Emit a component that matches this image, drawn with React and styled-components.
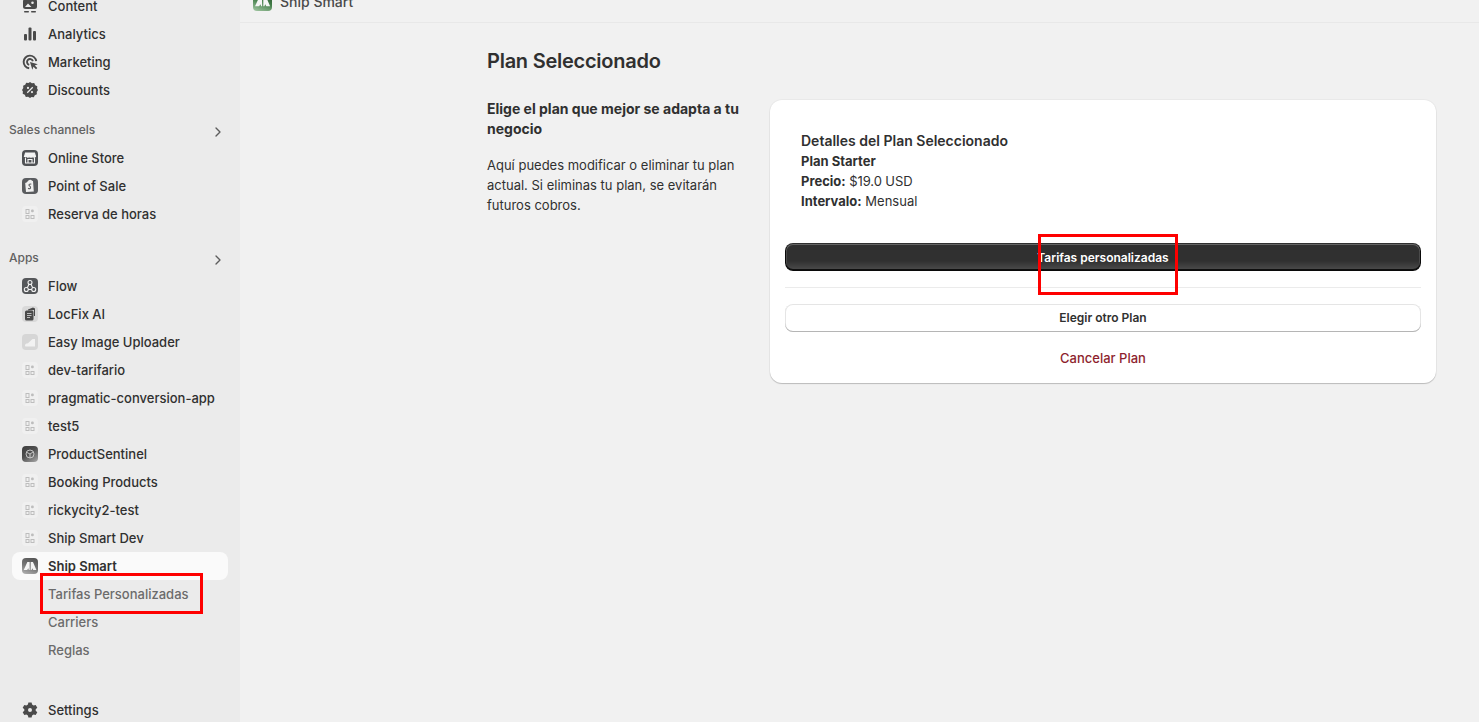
import styled, { createGlobalStyle } from 'styled-components';
import { ChevronRight } from 'lucide-react';

const GlobalStyle = createGlobalStyle`
  html, body {
    margin: 0;
    height: 100%;
    overflow: hidden;
    background: #f1f1f1;
    font-family: Inter, 'Noto Sans', sans-serif;
    color: #303030;
  }
  * {
    box-sizing: border-box;
  }
`;

const Page = styled.div`
  position: relative;
  display: flex;
  height: 722px;
  overflow: hidden;
`;

const Sidebar = styled.nav`
  flex: 0 0 240px;
  background: #ebebeb;
  padding: 0 12px;
  margin-top: -8px;
  height: 732px;
`;

const Row = styled.div`
  display: flex;
  align-items: center;
  gap: 8px;
  height: 28px;
  padding-left: 8px;
  border-radius: 8px;
  font-size: 13px;
  color: #303030;
  background: ${(p) => (p.$active ? '#fafafa' : 'transparent')};
  font-weight: ${(p) => (p.$active ? 600 : 500)};
`;

const SubRow = styled(Row)`
  padding-left: 36px;
  color: #6b6b6b;
  font-weight: 450;
`;

const SettingsRow = styled(Row)`
  margin-top: 32px;
`;

const SectionHead = styled.div`
  display: flex;
  align-items: center;
  justify-content: space-between;
  height: 28px;
  margin-top: ${(p) => p.$top}px;
  margin-left: -3px;
  padding: 0 2px 2px 0;
  font-size: 12px;
  font-weight: 550;
  color: #616161;
  svg {
    margin-top: 5px;
    color: #5c5c5c;
  }
`;

const IconBox = styled.span`
  display: flex;
  flex: 0 0 20px;
  width: 20px;
  height: 20px;
`;

const Tile = styled.span`
  display: flex;
  align-items: center;
  justify-content: center;
  flex: 0 0 16px;
  width: 16px;
  height: 16px;
  margin: 0 2px;
  border-radius: 4px;
  background: ${(p) => p.$bg || '#f0f0f0'};
`;

const Main = styled.main`
  flex: 1;
  min-width: 0;
  background: #f1f1f1;
`;

const TopBar = styled.header`
  height: 23px;
  padding-left: 13px;
  border-bottom: 1px solid #e8e8e8;
  overflow: hidden;
  font-size: 14px;
  font-weight: 450;
  color: #4a4a4a;
`;

const TopInner = styled.div`
  display: flex;
  align-items: center;
  gap: 8px;
  height: 20px;
  margin-top: -9px;
`;

const AppMark = styled.span`
  display: flex;
  align-items: flex-end;
  justify-content: center;
  width: 19px;
  height: 20px;
  border-radius: 4px;
  background: linear-gradient(200deg, #2f4a33 0%, #3f7a45 50%, #a5c9a6 100%);
`;

const Content = styled.div`
  width: 950px;
  margin-left: 247px;
  padding-top: 25px;
`;

const Title = styled.h1`
  margin: 0;
  font-size: 20px;
  line-height: 26px;
  font-weight: 600;
  letter-spacing: -0.25px;
  color: #303030;
`;

const Columns = styled.div`
  display: grid;
  grid-template-columns: 283px 666px;
  margin-top: 25px;
`;

const Aside = styled.div`
  padding-right: 24px;
  h2 {
    margin: 0 0 16px;
    font-size: 14px;
    line-height: 20px;
    font-weight: 650;
    color: #303030;
  }
  p {
    margin: 0;
    font-size: 13px;
    line-height: 20px;
    color: #303030;
  }
`;

const Card = styled.section`
  height: 283px;
  margin-top: 1px;
  padding: 31px 15px 0;
  background: #fff;
  border-radius: 12px;
  box-shadow: 0 1px 1px rgba(0, 0, 0, 0.2), 0 0 0 1px rgba(0, 0, 0, 0.03);
`;

const Details = styled.div`
  padding-left: 16px;
  font-size: 13px;
  line-height: 20px;
  color: #303030;
  b {
    font-weight: 650;
  }
`;

const DetailsTitle = styled.div`
  font-size: 14px;
  font-weight: 600;
`;

const Price = styled.span`
  letter-spacing: -0.1px;
`;

const BaseButton = styled.button`
  display: block;
  width: 100%;
  height: 28px;
  padding: 0;
  border: none;
  border-radius: 8px;
  font-family: inherit;
  font-size: 12px;
  font-weight: 600;
  cursor: pointer;
`;

const PrimaryButton = styled(BaseButton)`
  margin-top: 32px;
  color: #fff;
  background: linear-gradient(180deg, rgba(48, 48, 48, 0) 63.53%, rgba(255, 255, 255, 0.15) 100%), #303030;
  box-shadow: 0 -1px 0 1px rgba(0, 0, 0, 0.8) inset, 0 0 0 1px #303030 inset, 0 0.5px 0 1.5px rgba(255, 255, 255, 0.25) inset;
`;

const Divider = styled.hr`
  margin: 16px 0;
  border: none;
  border-top: 1px solid #ebebeb;
`;

const SecondaryButton = styled(BaseButton)`
  padding-bottom: 2px;
  color: #303030;
  background: #fff;
  box-shadow: 0 -1px 0 0 #b5b5b5 inset, 0 0 0 1px rgba(0, 0, 0, 0.1) inset;
`;

const CancelLink = styled.div`
  margin-top: 16px;
  text-align: center;
  font-size: 13px;
  line-height: 20px;
  font-weight: 500;
  color: #8e1f2e;
`;

const Callout = styled.div`
  position: absolute;
  left: ${(p) => p.$x}px;
  top: ${(p) => p.$y}px;
  width: ${(p) => p.$w}px;
  height: ${(p) => p.$h}px;
  border: 3px solid #fe0000;
  pointer-events: none;
`;

const Glyph = ({ children, fill = '#4a4a4a' }) => (
  <svg width="20" height="20" viewBox="0 0 20 20" fill={fill}>
    {children}
  </svg>
);

const ContentIcon = () => (
  <Glyph>
    <path fillRule="evenodd" d="M5.5 3h9A2.5 2.5 0 0 1 17 5.5v5a2.5 2.5 0 0 1-2.5 2.5h-9A2.5 2.5 0 0 1 3 10.5v-5A2.5 2.5 0 0 1 5.5 3Zm7 2.5a1.3 1.3 0 1 0 0 2.6 1.3 1.3 0 0 0 0-2.6ZM5 11l3-3.5 3.5 3.5H5Z" />
    <rect x="4" y="15" width="5" height="1.5" rx=".7" />
    <rect x="11" y="15" width="5" height="1.5" rx=".7" />
  </Glyph>
);

const AnalyticsIcon = () => (
  <Glyph>
    <rect x="4" y="10" width="3" height="6.5" rx="1" />
    <rect x="8.5" y="3.5" width="3" height="13" rx="1" />
    <rect x="13" y="7" width="3" height="9.5" rx="1" />
  </Glyph>
);

const MarketingIcon = () => (
  <Glyph>
    <g fill="none" stroke="#4a4a4a" strokeWidth="1.9">
      <path d="M9.2 16.2A6.3 6.3 0 1 1 16.2 9.2" />
      <path d="M9.2 12.9A3 3 0 1 1 12.9 9.2" />
    </g>
    <path d="M10 10l7.8 2.3-3 1.2 2.5 2.5-1.3 1.300-2.500-2.500-1.200 3L10 10Z" />
  </Glyph>
);

const DiscountIcon = () => (
  <Glyph>
    <path fillRule="evenodd" d="M10 2l1.900 1.300 2.300-.2 1 2.100 2.100 1-.2 2.300L18 10l-1.300 1.900.2 2.300-2.100 1-1 2.100-2.300-.2L10 18l-1.900-1.300-2.300.2-1-2.100-2.100-1 .2-2.300L2 10l1.300-1.900-.2-2.300 2.100-1 1-2.100 2.300.2L10 2Zm2.300 4.800-5.500 5.500.9.900 5.500-5.500-.9-.9ZM8 6.800a1.100 1.100 0 1 0 0 2.200 1.100 1.100 0 0 0 0-2.200Zm4 4.200a1.100 1.100 0 1 0 0 2.200 1.100 1.100 0 0 0 0-2.200Z" />
  </Glyph>
);

const SettingsIcon = () => (
  <Glyph>
    <path fillRule="evenodd" d="M8.400 2.500h3.200l.5 2.100 1.500.9 2.100-.6 1.600 2.800-1.600 1.500v1.600l1.600 1.500-1.600 2.800-2.100-.6-1.500.9-.5 2.100H8.400l-.5-2.100-1.500-.9-2.100.6-1.600-2.800 1.600-1.500V9.200L2.700 7.700l1.600-2.800 2.100.6 1.500-.9.500-2.100ZM10 8a2 2 0 1 0 0 4 2 2 0 0 0 0-4Z" />
  </Glyph>
);

const PlaceholderTile = () => (
  <Tile>
    <svg width="12" height="14" viewBox="0 0 12 14" fill="#bdbdbd">
      <path fillRule="evenodd" d="M1.500 2h4v5h-4V2Zm1 1v3h2V3h-2Z" />
      <rect x="7" y="2.500" width="2.800" height="2.800" rx="1.200" />
      <path fillRule="evenodd" d="M1.500 8h4v4h-4V8Zm1 1v2h2V9h-2ZM6.500 8h4v4h-4V8Zm1 1v2h2V9h-2Z" />
    </svg>
  </Tile>
);

const StoreTile = () => (
  <Tile $bg="#4f5154">
    <svg width="16" height="16" viewBox="0 0 16 16" fill="none" stroke="#f4f4f4" strokeWidth="1.100">
      <path d="M3.500 3h9l1 3.500c-.8 1-2 1-2.800 0-.8 1-2.600 1-3.400 0-.8 1-2 1-2.800 0H2.500l1-3.500Z" fill="#f4f4f4" />
      <path d="M3.500 7.500V13h9V7.500" />
      <path d="M6 13V9.500h4V13" />
    </svg>
  </Tile>
);

const PosTile = () => (
  <Tile $bg="#5a5c5f">
    <svg width="16" height="16" viewBox="0 0 16 16">
      <path d="M4.500 4.500c1-.5 1.500-2.500 3.500-2.800 1-.1 1.700.3 2 1l1 .3.8 10.500-7.800.5-.8-9 1.300-.5Z" fill="#f0f0f0" />
      <path d="M9.300 6.300c-1.700-.8-3 .4-2 1.400.8.800 1.900 1.200 1.100 2.400-.5.700-1.700.6-2.300.2" fill="none" stroke="#5a5c5f" strokeWidth="1.100" />
    </svg>
  </Tile>
);

const FlowTile = () => (
  <Tile $bg="#55575a">
    <svg width="16" height="16" viewBox="0 0 16 16" fill="none" stroke="#f2f2f2" strokeWidth="1.100">
      <circle cx="8" cy="4.500" r="2" />
      <circle cx="4.300" cy="11.500" r="2" />
      <circle cx="11.700" cy="11.500" r="2" />
      <path d="M7 6.300 5.300 9.800M9 6.300l1.700 3.500M6.300 11.500h3.400" />
    </svg>
  </Tile>
);

const LocFixTile = () => (
  <Tile $bg="#d9d9d9">
    <svg width="16" height="16" viewBox="0 0 16 16" fill="#4a4a4a">
      <path d="M6 3.500 11 1.500l2 1v7.500h-1V4L6 4.500v-1Z" />
      <rect x="3" y="4.500" width="8.500" height="10" rx="1.500" />
      <path d="M5 7.500h4.500M5 9.500h4.500M5 11.500h3" stroke="#d9d9d9" strokeWidth=".8" />
    </svg>
  </Tile>
);

const ImageTile = () => (
  <Tile $bg="#d6d6d6">
    <svg width="16" height="16" viewBox="0 0 16 16" fill="#f2f2f2">
      <path d="M3 11.500c0-1.500 1.500-2.200 3-2.200L10.500 5H13v7.500H4c-.6 0-1-.4-1-1Z" />
    </svg>
  </Tile>
);

const SentinelTile = () => (
  <Tile $bg="linear-gradient(145deg, #3c3c3c 0%, #505050 45%, #aaaaaa 100%)">
    <svg width="12" height="12" viewBox="0 0 12 12" fill="none" stroke="#d0d0d0" strokeWidth=".9">
      <circle cx="6" cy="6" r="4" />
      <path d="M3 4.500 6 6l3-2M6 6v4" />
    </svg>
  </Tile>
);

const ShipShape = ({ size, color }) => (
  <svg width={size} height={size} viewBox="0 0 14 14" fill={color}>
    <path d="M1.500 10.500 4.700 3.500h2V10.500H6L5.500 9 4.500 10.500H1.500Z" />
    <path d="M7.600 3.500h2l3 7H9.800L9 9l-.6 1.500h-.8v-7Z" />
  </svg>
);

const App = () => {
  return (
    <Page>
      <GlobalStyle />
      <Sidebar>
        <Row><IconBox><ContentIcon /></IconBox>Content</Row>
        <Row><IconBox><AnalyticsIcon /></IconBox>Analytics</Row>
        <Row><IconBox><MarketingIcon /></IconBox>Marketing</Row>
        <Row><IconBox><DiscountIcon /></IconBox>Discounts</Row>

        <SectionHead $top={12}>Sales channels<ChevronRight size={16} /></SectionHead>
        <Row><StoreTile />Online Store</Row>
        <Row><PosTile />Point of Sale</Row>
        <Row><PlaceholderTile />Reserva de horas</Row>

        <SectionHead $top={16}>Apps<ChevronRight size={16} /></SectionHead>
        <Row><FlowTile />Flow</Row>
        <Row><LocFixTile />LocFix AI</Row>
        <Row><ImageTile />Easy Image Uploader</Row>
        <Row><PlaceholderTile />dev-tarifario</Row>
        <Row><PlaceholderTile />pragmatic-conversion-app</Row>
        <Row><PlaceholderTile />test5</Row>
        <Row><SentinelTile />ProductSentinel</Row>
        <Row><PlaceholderTile />Booking Products</Row>
        <Row><PlaceholderTile />rickycity2-test</Row>
        <Row><PlaceholderTile />Ship Smart Dev</Row>
        <Row $active>
          <Tile $bg="linear-gradient(200deg, #505050 0%, #777777 55%, #b5b5b5 100%)">
            <ShipShape size={16} color="#f5f5f5" />
          </Tile>
          Ship Smart
        </Row>
        <SubRow>Tarifas Personalizadas</SubRow>
        <SubRow>Carriers</SubRow>
        <SubRow>Reglas</SubRow>
        <SettingsRow><IconBox><SettingsIcon /></IconBox>Settings</SettingsRow>
      </Sidebar>

      <Main>
        <TopBar>
          <TopInner>
            <AppMark><ShipShape size={19} color="#f5f5f5" /></AppMark>
            Ship Smart
          </TopInner>
        </TopBar>
        <Content>
          <Title>Plan Seleccionado</Title>
          <Columns>
            <Aside>
              <h2>Elige el plan que mejor se adapta a tu negocio</h2>
              <p>Aquí puedes modificar o eliminar tu plan actual. Si eliminas tu plan, se evitarán futuros cobros.</p>
            </Aside>
            <Card>
              <Details>
                <DetailsTitle>Detalles del Plan Seleccionado</DetailsTitle>
                <div><b>Plan Starter</b></div>
                <div><b>Precio:</b> <Price>$19.0 USD</Price></div>
                <div><b>Intervalo:</b> Mensual</div>
              </Details>
              <PrimaryButton>Tarifas personalizadas</PrimaryButton>
              <Divider />
              <SecondaryButton>Elegir otro Plan</SecondaryButton>
              <CancelLink>Cancelar Plan</CancelLink>
            </Card>
          </Columns>
        </Content>
      </Main>

      <Callout $x={40} $y={573} $w={163} $h={41} />
      <Callout $x={1038} $y={234} $w={140} $h={61} />
    </Page>
  );
};

export default App;
